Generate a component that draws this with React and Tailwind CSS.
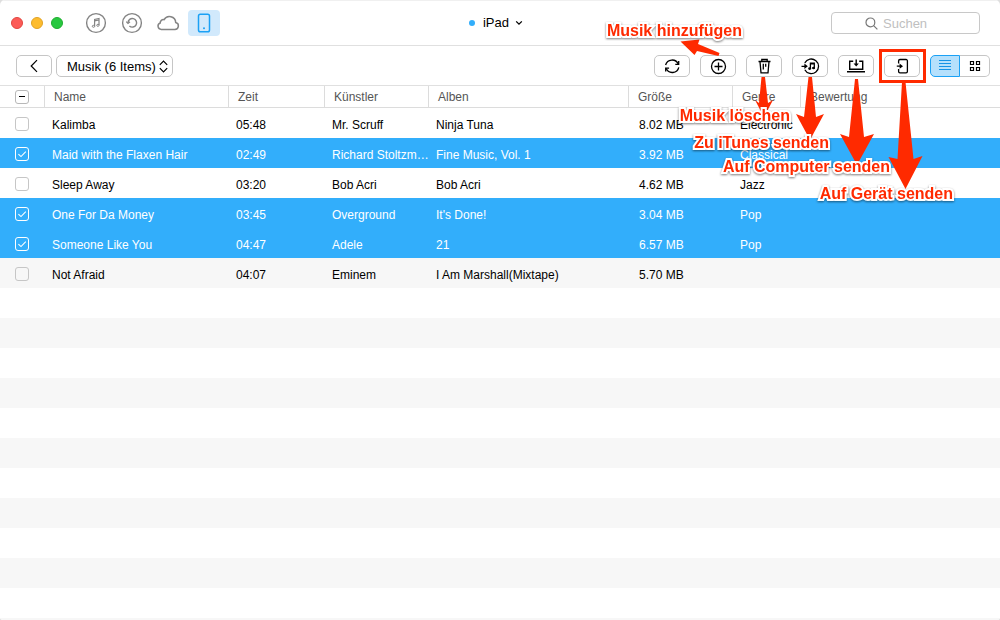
import React, { useState } from 'react';

const initialTracks = [
  { id: 1, name: 'Kalimba', time: '05:48', artist: 'Mr. Scruff', album: 'Ninja Tuna', size: '8.02 MB', genre: 'Electronic', checked: false },
  { id: 2, name: 'Maid with the Flaxen Hair', time: '02:49', artist: 'Richard Stoltzman', album: 'Fine Music, Vol. 1', size: '3.92 MB', genre: 'Classical', checked: true },
  { id: 3, name: 'Sleep Away', time: '03:20', artist: 'Bob Acri', album: 'Bob Acri', size: '4.62 MB', genre: 'Jazz', checked: false },
  { id: 4, name: 'One For Da Money', time: '03:45', artist: 'Overground', album: "It's Done!", size: '3.04 MB', genre: 'Pop', checked: true },
  { id: 5, name: 'Someone Like You', time: '04:47', artist: 'Adele', album: '21', size: '6.57 MB', genre: 'Pop', checked: true },
  { id: 6, name: 'Not Afraid', time: '04:07', artist: 'Eminem', album: 'I Am Marshall(Mixtape)', size: '5.70 MB', genre: '', checked: false },
];

const columns = [
  { label: 'Name', width: 'w-[184px]' },
  { label: 'Zeit', width: 'w-[96px]' },
  { label: 'Künstler', width: 'w-[104px]' },
  { label: 'Alben', width: 'w-[200px]' },
  { label: 'Größe', width: 'w-[104px]' },
  { label: 'Genre', width: 'w-[68px]' },
  { label: 'Bewertung', width: '' },
];

const Icon = ({ size = 20, width = 1.3, children }) => (
  <svg width={size} height={size} viewBox={`0 0 ${size} ${size}`} fill="none" stroke="currentColor" strokeWidth={width} aria-hidden="true">
    {children}
  </svg>
);

const MusicIcon = () => (
  <Icon size={22} width={1.4}>
    <circle cx="11" cy="11" r="9.4" />
    <path strokeWidth="1.2" d="M9.6 14.200V7.400l4.400-.9v6.600M9.600 8.900l4.400-.9" />
    <ellipse strokeWidth="1" cx="8.500" cy="14.300" rx="1.200" ry="1" />
    <ellipse strokeWidth="1" cx="12.900" cy="13.300" rx="1.200" ry="1" />
  </Icon>
);

const BackupIcon = () => (
  <Icon size={22} width={1.4}>
    <circle cx="11" cy="11" r="9.4" />
    <path d="M7 10.800a4.300 4.300 0 1 1 1.400 3.200" />
    <path strokeWidth="1.200" d="m5.200 9.600 1.800 1.800 2-1.600" />
  </Icon>
);

const CloudIcon = () => (
  <svg width="24" height="18" viewBox="0 0 24 18" fill="none" stroke="currentColor" strokeWidth="1.5" aria-hidden="true">
    <path d="M5.400 15.400h13.400a3.500 3.500 0 0 0 .9-6.900 6.200 6.200 0 0 0-11.600-2.800 3.200 3.200 0 0 0-3.900 3.300 3.300 3.300 0 0 0 1.200 6.400Z" />
  </svg>
);

const TabletIcon = () => (
  <Icon size={20} width={1.5}>
    <rect x="4.500" y="1.200" width="11" height="17.600" rx="1.800" />
    <circle cx="10" cy="15.300" r="1" fill="currentColor" stroke="none" />
  </Icon>
);

const RefreshIcon = () => (
  <Icon width={1.3}>
    <path d="M3.600 9A6.700 6.700 0 0 1 16.200 8M16.800 11.400A6.700 6.700 0 0 1 4.200 12.600" />
    <path d="M16.700 5v3.400h-3.400M3.700 15.600v-3.400h3.400" />
  </Icon>
);

const AddIcon = () => (
  <Icon width={1.3}>
    <circle cx="10.5" cy="10.5" r="7" />
    <path d="M10.5 6.5v8M6.5 10.5h8" />
  </Icon>
);

const TrashIcon = () => (
  <Icon width={1.3}>
    <path d="M4.500 5.500h12M7.800 5.300V3.500h5.400v1.800M6 5.600l1 11.300h7l1-11.300" />
    <path d="M9.300 7.800v5.700M11.700 7.800v3" />
  </Icon>
);

const ToItunesIcon = () => (
  <Icon width={1.3}>
    <path d="M4.800 6.900a7.300 7.300 0 1 1 0 6.800" />
    <path d="M1.500 10.300h4" />
    <path d="M4.400 7.600v5.400l3.400-2.700Z" fill="currentColor" stroke="none" />
    <path d="M10.400 12.600V7.200h3.900v4.800M10.400 7.800h3.900" />
    <ellipse cx="9.700" cy="12.600" rx=".9" ry=".7" fill="currentColor" />
    <ellipse cx="13.600" cy="12" rx=".9" ry=".7" fill="currentColor" />
  </Icon>
);

const ToComputerIcon = () => (
  <Icon width={1.4}>
    <path d="M7.200 5.200H3.700v8h13V5.200h-3.500" />
    <path d="M1 15.700h18" />
    <path d="M10.200 3.400v5" />
    <path d="M7.600 7.400h5.200l-2.600 3.200Z" fill="currentColor" stroke="none" />
  </Icon>
);

const ToDeviceIcon = () => (
  <Icon width={1.3}>
    <path d="M6.600 7.400V4.900a1.400 1.400 0 0 1 1.400-1.400h6a1.400 1.400 0 0 1 1.400 1.400v10.600a1.400 1.400 0 0 1-1.400 1.400H8a1.400 1.400 0 0 1-1.400-1.400V13" />
    <path d="M4.800 10.200h4" />
    <path d="M7.600 7.600v5.200l3.400-2.600Z" fill="currentColor" stroke="none" />
  </Icon>
);

const actions = [
  { label: 'Aktualisieren', icon: RefreshIcon },
  { label: 'Musik hinzufügen', icon: AddIcon },
  { label: 'Musik löschen', icon: TrashIcon },
  { label: 'Zu iTunes senden', icon: ToItunesIcon },
  { label: 'Auf Computer senden', icon: ToComputerIcon },
  { label: 'Auf Gerät senden', icon: ToDeviceIcon },
];

const callouts = [
  { text: 'Musik hinzufügen', place: 'right-[258px] top-5' },
  { text: 'Musik löschen', place: 'right-[210px] top-[105px]' },
  { text: 'Zu iTunes senden', place: 'right-[171px] top-[132px]' },
  { text: 'Auf Computer senden', place: 'right-[110px] top-[156px]' },
  { text: 'Auf Gerät senden', place: 'right-[47px] top-[183px]' },
];

const Checkbox = ({ label, checked, onChange }) => (
  <span className="relative block h-3.5 w-3.5">
    <input
      type="checkbox"
      aria-label={label}
      checked={checked}
      onChange={onChange}
      className="block h-3.5 w-3.5 appearance-none rounded-[3px] border border-[#c6c6c6] bg-transparent checked:border-white"
    />
    {checked && (
      <svg className="pointer-events-none absolute inset-0" width="14" height="14" viewBox="0 0 14 14" fill="none" stroke="white" strokeWidth="1.1" aria-hidden="true">
        <path d="M3.4 7.2 6 9.6l4.8-5" />
      </svg>
    )}
  </span>
);

const TitleBar = () => (
  <header className="grid h-[46px] grid-cols-[1fr_auto_1fr] items-center border-t border-b border-t-[#f0f0f0] border-b-[#e0e0e0]">
    <div className="flex items-center pl-[11px]">
      <div className="flex gap-2">
        <button aria-label="Schließen" className="h-3 w-3 rounded-full border border-[#e2463f] bg-[#fc5b57]" />
        <button aria-label="Minimieren" className="h-3 w-3 rounded-full border border-[#e1a325] bg-[#fdbc2e]" />
        <button aria-label="Maximieren" className="h-3 w-3 rounded-full border border-[#1fae2f] bg-[#28c840]" />
      </div>
      <nav className="ml-[22px] flex items-center text-[#848484]">
        <button aria-label="iTunes"><MusicIcon /></button>
        <button aria-label="Backup" className="ml-3.5"><BackupIcon /></button>
        <button aria-label="iCloud" className="ml-[13px]"><CloudIcon /></button>
        <button aria-label="Gerät" className="ml-2 flex h-[26px] w-8 items-center justify-center rounded bg-[#d1e9fc] text-[#1ba1f5]">
          <TabletIcon />
        </button>
      </nav>
    </div>
    <button className="flex items-center pr-2 text-[13px] leading-4 text-black">
      <span className="mr-2 h-1.5 w-1.5 rounded-full bg-[#32aefb]" />
      iPad
      <svg className="ml-1.5" width="8" height="6" viewBox="0 0 8 6" fill="none" stroke="currentColor" strokeWidth="1.3" aria-hidden="true">
        <path d="m1.2 1.4 2.8 2.8 2.8-2.8" />
      </svg>
    </button>
    <div className="flex justify-end pr-5">
      <label className="flex h-[22px] w-[149px] items-center rounded border border-[#c8c8c8] pl-[33px]">
        <svg width="13" height="13" viewBox="0 0 13 13" fill="none" stroke="#777" strokeWidth="1.2" aria-hidden="true">
          <circle cx="5.4" cy="5.4" r="4.4" />
          <path d="m8.6 8.6 3.8 3.8" />
        </svg>
        <input
          type="search"
          aria-label="Suchen"
          placeholder="Suchen"
          className="ml-[5px] w-20 bg-transparent pt-0.5 text-[13px] leading-4 outline-none placeholder:text-[#c0c0c0]"
        />
      </label>
    </div>
  </header>
);

const Toolbar = () => (
  <div className="flex h-10 items-center border-b border-[#e0e0e0] pr-2.5 pl-4 text-black">
    <button aria-label="Zurück" className="flex h-[22px] w-9 items-center justify-center rounded-[5px] border border-[#c6c6c6]">
      <svg width="8" height="14" viewBox="0 0 8 14" fill="none" stroke="currentColor" strokeWidth="1.2" aria-hidden="true">
        <path d="M7 1.2 1.2 7 7 12.8" />
      </svg>
    </button>
    <div className="relative ml-1">
      <select aria-label="Kategorie" className="block h-[22px] w-[117px] appearance-none rounded-[5px] border border-[#c6c6c6] bg-white pt-0.5 pl-2.5 text-[13px] leading-4">
        <option>Musik (6 Items)</option>
      </select>
      <svg className="pointer-events-none absolute top-[5px] right-[5px]" width="9" height="13" viewBox="0 0 9 13" fill="none" stroke="currentColor" strokeWidth="1.2" aria-hidden="true">
        <path d="m.8 4.8 3.7-3.7 3.7 3.7M.8 8.2l3.7 3.7 3.7-3.7" />
      </svg>
    </div>
    <div className="ml-auto flex gap-2.5">
      {actions.map(({ label, icon: ActionIcon }) => (
        <button key={label} aria-label={label} className="flex h-[22px] w-9 items-center justify-center rounded-[5px] border border-[#c6c6c6]">
          <ActionIcon />
        </button>
      ))}
      <div className="flex">
        <button aria-label="Liste" className="flex h-[22px] w-[30px] items-center justify-center rounded-l-[5px] border border-[#1ba1f5] bg-[#b5e0fc] text-[#1593e6]">
          <svg width="14" height="11" viewBox="0 0 14 11" stroke="currentColor" aria-hidden="true">
            <path d="M1 .5h12M1 3.5h12M1 6.5h12M1 9.5h12" />
          </svg>
        </button>
        <button aria-label="Raster" className="flex h-[22px] w-[30px] items-center justify-center rounded-r-[5px] border border-l-0 border-[#c6c6c6]">
          <svg width="12" height="12" viewBox="0 0 12 12" fill="none" stroke="currentColor" strokeWidth="1.2" aria-hidden="true">
            <path d="M1.5 1.5h3v3h-3zM7.5 1.5h3v3h-3zM1.5 7.5h3v3h-3zM7.5 7.5h3v3h-3z" />
          </svg>
        </button>
      </div>
    </div>
  </div>
);

const TrackTable = ({ tracks, onToggle }) => (
  <table className="w-full table-fixed border-separate border-spacing-0 text-left text-xs">
    <thead>
      <tr className="h-[22px] text-[#555]">
        <th className="w-[45px] border-r border-b border-[#dcdcdc] p-0 pl-[15px]">
          <button aria-label="Auswahl aufheben" className="flex h-3.5 w-3.5 items-center justify-center rounded-[3px] border border-[#b8b8b8]">
            <span className="h-px w-1.5 bg-black" />
          </button>
        </th>
        {columns.map((col) => (
          <th key={col.label} className={`${col.width} border-r border-b border-[#dcdcdc] p-0 pl-[9px] font-normal last:border-r-0`}>
            {col.label}
          </th>
        ))}
      </tr>
    </thead>
    <tbody>
      {tracks.map((track) => (
        <tr
          key={track.id}
          className={`h-[30px] ${track.checked ? 'bg-[#32aefb] text-white' : 'bg-white text-black last:bg-[#f7f7f7]'}`}
        >
          <td className="p-0 pt-0.5 pl-[15px]">
            <Checkbox label={track.name} checked={track.checked} onChange={() => onToggle(track.id)} />
          </td>
          <td className="truncate p-0 pt-1 pl-[7px]">{track.name}</td>
          <td className="truncate p-0 pt-1 pl-[7px]">{track.time}</td>
          <td className="truncate p-0 pt-1 pl-[7px]">{track.artist}</td>
          <td className="truncate p-0 pt-1 pl-[7px]">{track.album}</td>
          <td className="truncate p-0 pt-1 pl-2.5">{track.size}</td>
          <td className="overflow-visible p-0 pt-1 pl-[7px] whitespace-nowrap">{track.genre}</td>
          <td className="p-0" />
        </tr>
      ))}
    </tbody>
  </table>
);

const Callouts = () => (
  <div className="pointer-events-none absolute top-0 right-0 h-[210px] w-[400px]">
    <svg className="absolute inset-0" width="400" height="210" viewBox="0 0 400 210" fill="#ff2a00" aria-hidden="true">
      <path d="M80.500 41.500 99.500 39.500 98 44 119.500 53 118.500 56 97 51 94.500 55Z" />
      <path d="M161.500 77h3.500l3 26 5-3-9 17-9-17 4 3Z" />
      <path d="M208.500 77h3.500l4 40 8-3-14 26-14-26 8 3Z" />
      <path d="M255 79h3l6 58 10-3-17 31-17-31 9 3Z" />
      <path d="M302 82h3.500l8 77 9-3-17 33-17-32 9 2Z" />
      <rect x="280.500" y="50.500" width="44" height="31" fill="none" stroke="#ff2a00" strokeWidth="3" />
    </svg>
    {callouts.map((callout) => (
      <span
        key={callout.text}
        className={`absolute ${callout.place} text-base leading-[22px] font-bold whitespace-nowrap text-[#ff2a00] [paint-order:stroke_fill] drop-shadow-[0_1px_1px_rgba(0,0,0,0.5)] [-webkit-text-stroke:4px_white]`}
      >
        {callout.text}
      </span>
    ))}
  </div>
);

const App = () => {
  const [tracks, setTracks] = useState(initialTracks);

  const handleToggle = (id) => {
    setTracks(tracks.map((t) => (t.id === id ? { ...t, checked: !t.checked } : t)));
  };

  return (
    <div className="bg-[#dedede]">
      <div className="relative flex min-h-screen flex-col overflow-hidden rounded-t-[5px] rounded-b-[3px] bg-white font-['Liberation_Sans',Arial,sans-serif]">
        <TitleBar />
        <Toolbar />
        <TrackTable tracks={tracks} onToggle={handleToggle} />
        {/* striped empty rows */}
        <div className="flex-1 bg-[repeating-linear-gradient(to_bottom,#fff_0px_30px,#f7f7f7_30px_60px)]" />
        <Callouts />
      </div>
    </div>
  );
};

export default App;
